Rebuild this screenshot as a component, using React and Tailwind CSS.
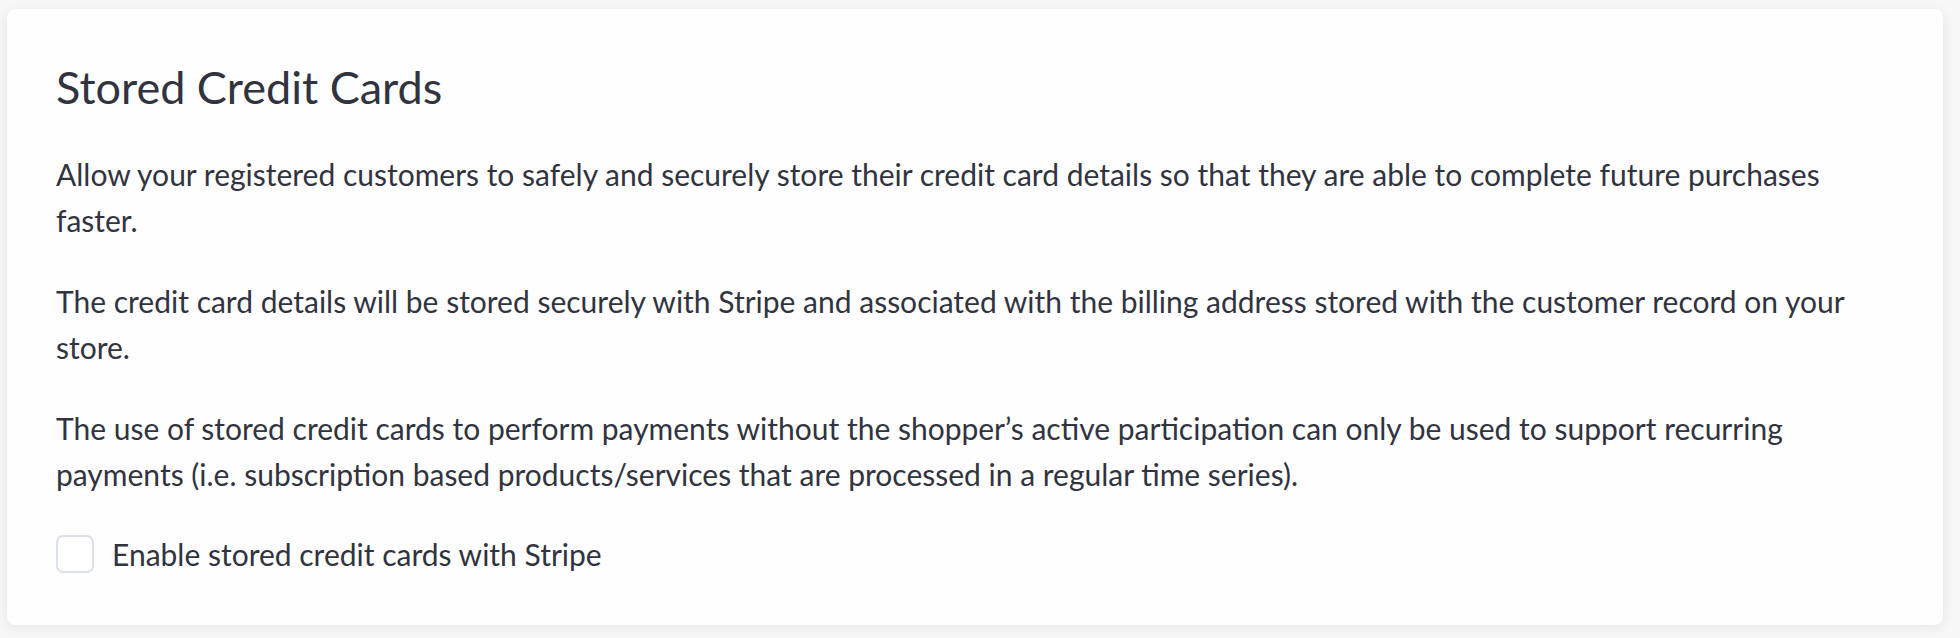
import React from "react";

export default function App() {
  return (
    <div className="min-h-[638px] w-[1960px] bg-[#f7f7f8] pl-[7px] pt-[9px] font-['Lato',sans-serif] text-[#31343f]">
      <div className="w-[1936px] rounded-[8px] bg-[#fefefe] px-[49px] pt-[49px] pb-[52px] shadow-[0_2px_12px_rgba(0,0,0,0.08)]">
        <h2 className="mb-[35px] text-[45px] leading-[58px] font-normal">Stored Credit Cards</h2>
        <p className="mb-[35px] text-[30px] leading-[46px]">
          Allow your registered customers to safely and securely store their credit card details so that they are able to complete future purchases faster.
        </p>
        <p className="mb-[35px] text-[30px] leading-[46px]">
          The credit card details will be stored securely with Stripe and associated with the billing address stored with the customer record on your store.
        </p>
        <p className="mb-[38px] text-[30px] leading-[46px]">
          The use of stored credit cards to perform payments without the shopper’s active participation can only be used to support recurring payments (i.e. subscription based products/services that are processed in a regular time series).
        </p>
        <label className="flex items-center gap-[18px]">
          <span className="block h-[38px] w-[38px] shrink-0 rounded-[7px] border-2 border-[#dcdfec] bg-white" />
          <span className="text-[30px] leading-[38px]">Enable stored credit cards with Stripe</span>
        </label>
      </div>
    </div>
  );
}
